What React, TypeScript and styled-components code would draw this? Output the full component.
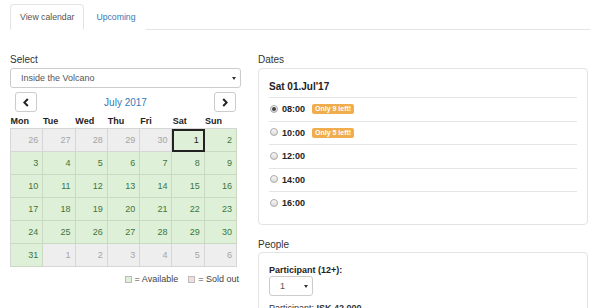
import { FC } from 'react';
import styled, { createGlobalStyle } from 'styled-components';

// kalender: 6 vikur, mán - sun
const weeks = [
    [26, 27, 28, 29, 30, 1, 2],
    [3, 4, 5, 6, 7, 8, 9],
    [10, 11, 12, 13, 14, 15, 16],
    [17, 18, 19, 20, 21, 22, 23],
    [24, 25, 26, 27, 28, 29, 30],
    [31, 1, 2, 3, 4, 5, 6],
]
const dayNames = ['Mon', 'Tue', 'Wed', 'Thu', 'Fri', 'Sat', 'Sun']

const times = [
    { time: '08:00', left: 9, checked: true },
    { time: '10:00', left: 5, checked: false },
    { time: '12:00', left: 0, checked: false },
    { time: '14:00', left: 0, checked: false },
    { time: '16:00', left: 0, checked: false },
]

const GlobalStyle = createGlobalStyle`
    * { box-sizing: border-box; }
    body {
        margin: 0;
        background: #fff;
        color: #333;
        font-family: "Liberation Sans", Arial, sans-serif;
        font-size: 9px;
    }
`

const Chevron: FC<{ dir: 'left' | 'right' }> = ({ dir }) => (
    <svg width="6" height="9" viewBox="0 0 6 9">
        <polyline
            points={dir === 'left' ? '4.8,1 1.3,4.5 4.8,8' : '1.2,1 4.7,4.5 1.2,8'}
            fill="none"
            stroke="#222"
            strokeWidth="2"
        />
    </svg>
)

export default function App() {
    return (
        <>
            <GlobalStyle />
            <SPage>
                <STabs>
                    <STab $active>View calendar</STab>
                    <STab>Upcoming</STab>
                </STabs>
                <SColumns>
                    <div>
                        <SLabel>Select</SLabel>
                        <SSelect $width="100%">
                            <span>Inside the Volcano</span>
                            <SCaret />
                        </SSelect>
                        <SNav>
                            <SNavButton><Chevron dir="left" /></SNavButton>
                            <SMonth>July 2017</SMonth>
                            <SNavButton><Chevron dir="right" /></SNavButton>
                        </SNav>
                        <SDayNames>
                            {dayNames.map((d) => <span key={d}>{d}</span>)}
                        </SDayNames>
                        <SGrid>
                            {weeks.map((week, w) =>
                                week.map((day, i) => {
                                    const other = (w === 0 && day > 20) || (w === 5 && day < 20)
                                    const selected = w === 0 && day === 1
                                    return (
                                        <SCell
                                            key={`${w}-${i}`}
                                            $kind={other ? 'other' : 'available'}
                                            $selected={selected}
                                        >
                                            {day}
                                        </SCell>
                                    )
                                })
                            )}
                        </SGrid>
                        <SLegend>
                            <SSwatch $color="#dff0d8" />= Available
                            <SSwatch $color="#f2dede" $gap />= Sold out
                        </SLegend>
                    </div>
                    <div>
                        <SLabel>Dates</SLabel>
                        <SPanel>
                            <SDateTitle>Sat 01.Jul'17</SDateTitle>
                            {times.map((t) => (
                                <STimeRow key={t.time}>
                                    <SRadio $checked={t.checked} />
                                    <STime>{t.time}</STime>
                                    {t.left > 0 && <SBadge>Only {t.left} left!</SBadge>}
                                </STimeRow>
                            ))}
                        </SPanel>
                        <SLabel $spaced>People</SLabel>
                        <SPanel $people>
                            <SFieldLabel>Participant (12+):</SFieldLabel>
                            <SSelect $width="44px">
                                <span>1</span>
                                <SCaret />
                            </SSelect>
                            <SPrice>Participant: <b>ISK 42.000</b></SPrice>
                        </SPanel>
                    </div>
                </SColumns>
            </SPage>
        </>
    )
}

const SPage = styled.div`
    padding: 4px 10px 0 10px;
    width: 600px;
    height: 308px;
    overflow: hidden;
`
const STabs = styled.div`
    display: flex;
    height: 26px;
    border-bottom: 1px solid #e3e3e3;
`
const STab = styled.div<{ $active?: boolean }>`
    display: flex;
    align-items: center;
    padding: 0 9px 1px;
    height: 26px;
    margin-bottom: -1px;
    font-size: 8.7px;
    color: ${(p) => (p.$active ? '#555' : '#337ab7')};
    background: #fff;
    border: 1px solid ${(p) => (p.$active ? '#e3e3e3' : 'transparent')};
    border-bottom-color: ${(p) => (p.$active ? '#fff' : 'transparent')};
    border-radius: 4px 4px 0 0;
    ${(p) => !p.$active && 'padding-left: 11px;'}
`
const SColumns = styled.div`
    display: grid;
    grid-template-columns: 231px 330px;
    column-gap: 17px;
    margin-top: 24px;
`
const SLabel = styled.div<{ $spaced?: boolean }>`
    font-size: 10px;
    line-height: 12px;
    margin-bottom: ${(p) => (p.$spaced ? '1px' : '2px')};
    margin-top: ${(p) => (p.$spaced ? '14px' : '0')};
    color: #333;
`
const SSelect = styled.div<{ $width: string }>`
    display: flex;
    align-items: center;
    justify-content: space-between;
    width: ${(p) => p.$width};
    height: 20px;
    padding: 0 4px 0 10px;
    border: 1px solid #ccc;
    border-radius: 3px;
    background: #fff;
    font-size: 9px;
    color: #555;
`
const SCaret = styled.span`
    width: 0;
    height: 0;
    border-left: 2.5px solid transparent;
    border-right: 2.5px solid transparent;
    border-top: 3.5px solid #333;
    margin-top: 1px;
`
const SNav = styled.div`
    display: flex;
    align-items: center;
    justify-content: space-between;
    padding: 0 5px;
    margin-top: 4px;
    height: 20px;
`
const SNavButton = styled.div`
    display: flex;
    align-items: center;
    justify-content: center;
    width: 22px;
    height: 20px;
    border: 1px solid #ccc;
    border-radius: 3px;
    background: #fff;
`
const SMonth = styled.div`
    font-size: 10px;
    color: #337ab7;
`
const SDayNames = styled.div`
    display: grid;
    grid-template-columns: repeat(7, 1fr);
    width: 227px;
    height: 16px;
    align-items: end;
    padding-bottom: 2px;
    font-size: 9px;
    font-weight: bold;
    color: #222;
    span { padding-left: 0.5px; }
`
const SGrid = styled.div`
    display: grid;
    grid-template-columns: repeat(7, 1fr);
    grid-auto-rows: 23px;
    width: 227px;
    border-left: 1px solid #d6d6d6;
    border-top: 1px solid #d6d6d6;
`
const SCell = styled.div<{ $kind: 'other' | 'available'; $selected?: boolean }>`
    display: flex;
    align-items: center;
    justify-content: flex-end;
    padding-right: 4px;
    font-size: 9px;
    border-right: 1px solid ${(p) => (p.$kind === 'other' ? '#d6d6d6' : '#c9d9c2')};
    border-bottom: 1px solid ${(p) => (p.$kind === 'other' ? '#d6d6d6' : '#c9d9c2')};
    background: ${(p) => (p.$kind === 'other' ? '#eeeeee' : '#dff0d8')};
    color: ${(p) => (p.$kind === 'other' ? '#a5a5a5' : '#3c763d')};
    ${(p) => p.$selected && `
        outline: 2px solid #222;
        outline-offset: -2px;
        color: #222;
        padding-right: 5px;
    `}
`
const SLegend = styled.div`
    display: flex;
    align-items: center;
    justify-content: flex-end;
    width: 229px;
    margin-top: 6px;
    font-size: 9px;
    line-height: 12px;
    color: #444;
`
const SSwatch = styled.span<{ $color: string; $gap?: boolean }>`
    display: inline-block;
    width: 7px;
    height: 7px;
    margin-right: 3px;
    margin-left: ${(p) => (p.$gap ? '10px' : '0')};
    background: ${(p) => p.$color};
    border: 1px solid #bbb;
`
const SPanel = styled.div<{ $people?: boolean }>`
    border: 1px solid #e3e3e3;
    border-radius: 4px;
    padding: ${(p) => (p.$people ? '11px 10px 0' : '12px 10px 9px')};
    ${(p) => p.$people && 'height: 80px;'}
`
const SDateTitle = styled.div`
    font-size: 10px;
    font-weight: bold;
    line-height: 12px;
    padding-bottom: 4px;
    border-bottom: 1px solid #e5e5e5;
    color: #222;
`
const STimeRow = styled.div`
    display: flex;
    align-items: center;
    height: 23.5px;
    border-bottom: 1px solid #e5e5e5;
    &:last-child {
        border-bottom: none;
        height: 22.5px;
    }
`
const SRadio = styled.span<{ $checked?: boolean }>`
    position: relative;
    flex: none;
    width: 8px;
    height: 8px;
    margin: 0 4px 1px 1px;
    border-radius: 50%;
    border: 1px solid #aaa;
    background: linear-gradient(#fafafa, #d8d8d8);
    ${(p) => p.$checked && `
        &::after {
            content: '';
            position: absolute;
            left: 1px;
            top: 1px;
            width: 4px;
            height: 4px;
            border-radius: 50%;
            background: #444;
        }
    `}
`
const STime = styled.span`
    font-size: 9px;
    font-weight: bold;
    color: #222;
    width: 30px;
`
const SBadge = styled.span`
    display: inline-block;
    height: 10px;
    line-height: 10px;
    padding: 0 3px;
    border-radius: 2px;
    background: #f0ad4e;
    color: #fff;
    font-size: 7px;
    font-weight: bold;
`
const SFieldLabel = styled.div`
    font-size: 9px;
    font-weight: bold;
    line-height: 12px;
    color: #222;
`
const SPrice = styled.div`
    margin-top: 6px;
    font-size: 9px;
    line-height: 12px;
    color: #333;
`
